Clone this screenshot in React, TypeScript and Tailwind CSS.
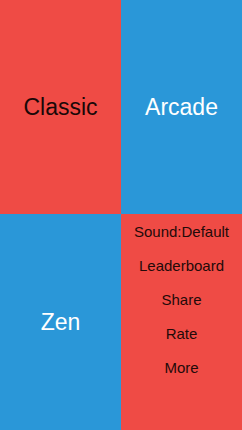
const MENU = ["Sound:Default", "Leaderboard", "Share", "Rate", "More"]

export default function App() {
  return (
    <div
      className="grid h-[430px] w-[242px] grid-cols-[121px_121px] grid-rows-[214px_216px]"
      style={{ fontFamily: '"Liberation Sans", Arial, sans-serif' }}
    >
      <div className="flex items-center justify-center bg-[#ef4b45] text-[23px] text-[#1a0808]">
        Classic
      </div>
      <div className="flex items-center justify-center bg-[#2a97d8] text-[23px] text-white">
        Arcade
      </div>
      <div className="flex items-center justify-center bg-[#2a97d8] text-[23px] text-white">
        Zen
      </div>
      <div className="flex flex-col items-center bg-[#ef4b45] pt-px text-[15px] text-[#230a09]">
        {MENU.map((item) => (
          <div key={item} className="flex h-[34px] items-center">
            {item}
          </div>
        ))}
      </div>
    </div>
  )
}
